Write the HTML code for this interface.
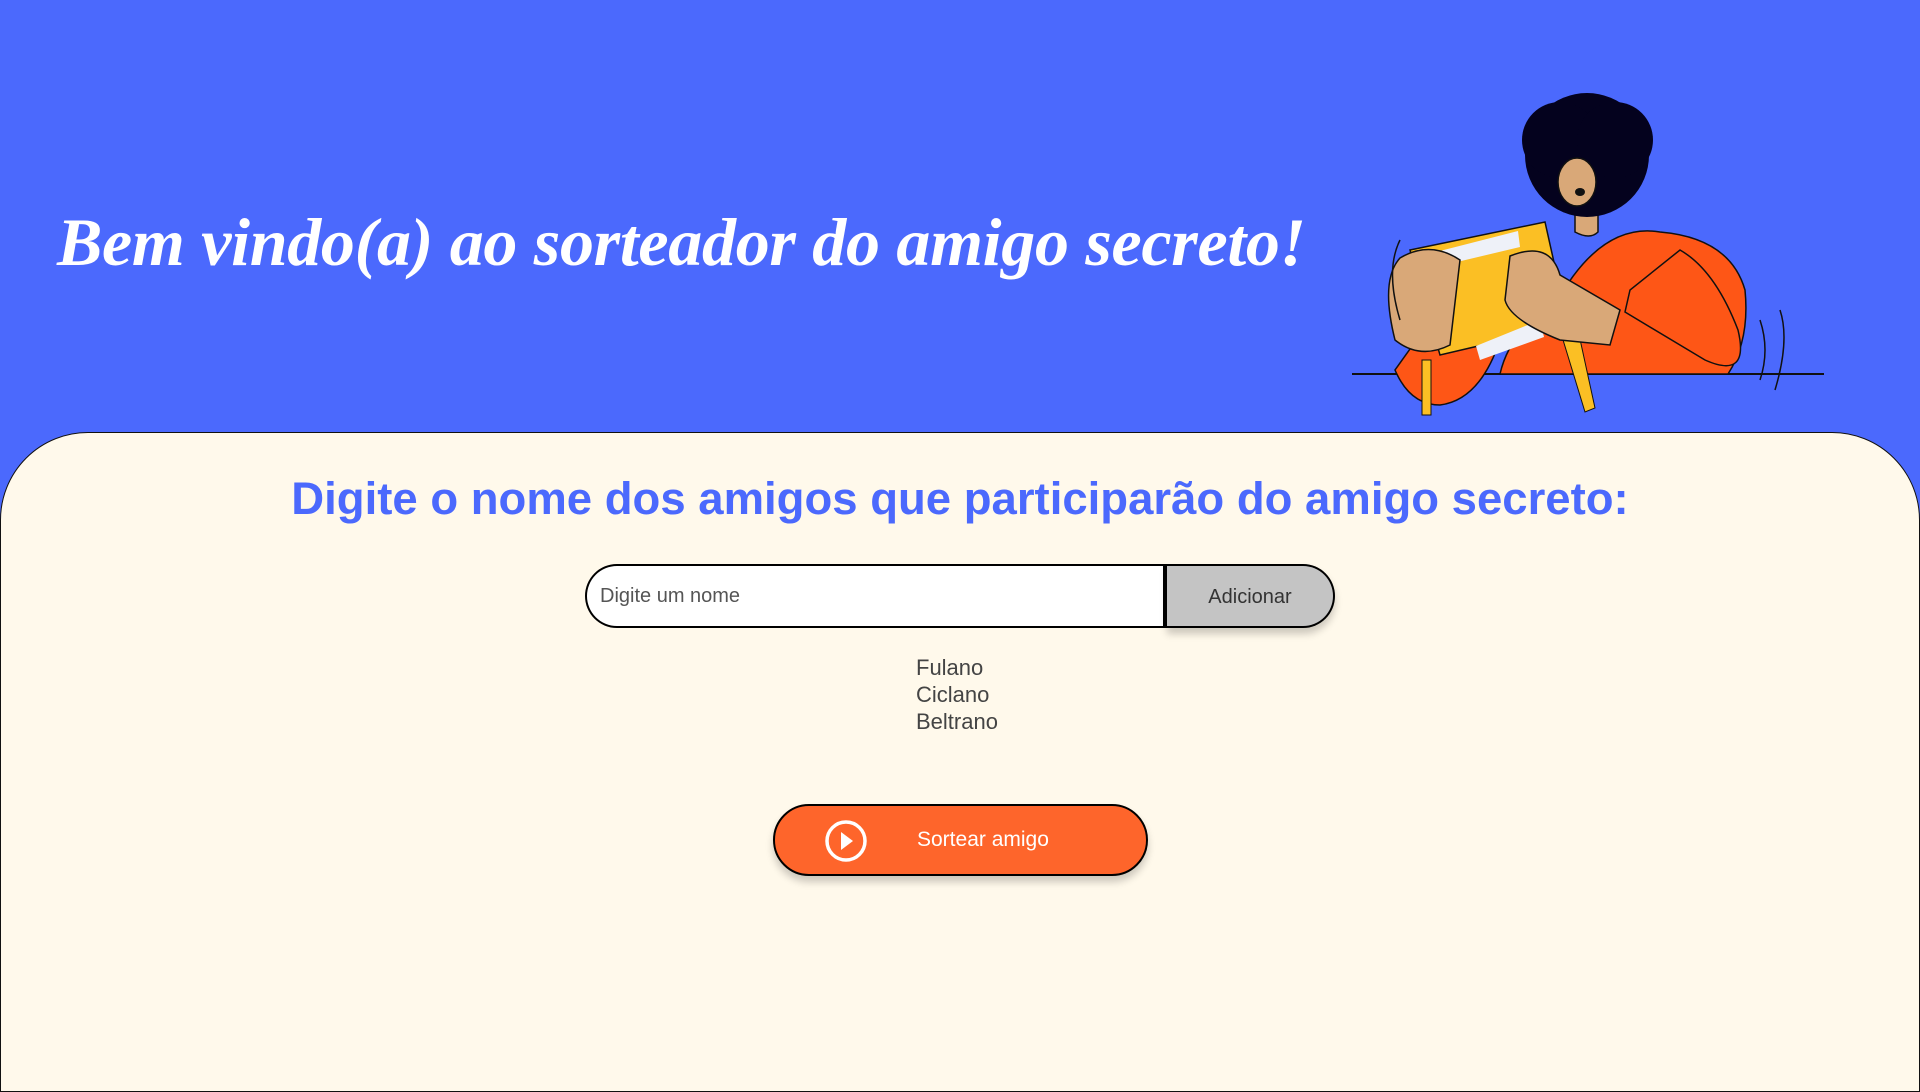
<!DOCTYPE html>
<html><head><meta charset="utf-8"><style>
*{margin:0;padding:0;box-sizing:border-box}
body{width:1920px;height:1080px;background:#4B69FD;position:relative;overflow:hidden;font-family:"Liberation Sans",sans-serif}
h1{position:absolute;left:57px;top:203px;font-family:"Liberation Serif",serif;font-style:italic;font-weight:bold;font-size:68px;color:#fff;white-space:nowrap;letter-spacing:-0.3px}
.panel{position:absolute;left:0;top:432px;width:1920px;height:660px;background:#FFF9EB;border:1.5px solid #111;border-radius:88px 88px 0 0}
h2{position:absolute;left:0;width:1920px;top:473px;text-align:center;color:#4B69FD;font-size:45.5px;font-weight:bold}
.inp{position:absolute;left:585px;top:564px;width:582px;height:64px;background:#fff;border:2.5px solid #000;border-right:4px solid #000;border-radius:32px 0 0 32px;font-size:20px;color:#555;padding:19px 0 0 13px}
.add{position:absolute;left:1167px;top:564px;width:168px;height:64px;background:#C4C4C4;border:2.5px solid #000;border-left:none;border-radius:0 32px 32px 0;font-size:20px;color:#333;text-align:center;line-height:62px;box-shadow:0 6px 8px rgba(0,0,0,.2)}
.list{position:absolute;left:916px;top:654px;font-size:22px;color:#444;line-height:27px}
.btn{position:absolute;left:773px;top:804px;width:375px;height:72px;background:#FE652B;border:2.5px solid #000;border-radius:36px;box-shadow:0 6px 8px rgba(0,0,0,.2);color:#fff;font-size:21px}
.btn span{position:absolute;left:142px;top:22px}
</style></head><body>
<h1>Bem vindo(a) ao sorteador do amigo secreto!</h1>
<svg style="position:absolute;left:1340px;top:90px" width="500" height="330" viewBox="1340 90 500 330">
<line x1="1352" y1="374" x2="1824" y2="374" stroke="#111" stroke-width="2"/>
<path d="M1555 305 Q1600 222 1660 232 Q1730 238 1745 290 Q1750 340 1728 374 L1500 374 Q1510 330 1555 305Z" fill="#FE5616" stroke="#111" stroke-width="1.5"/>
<path d="M1625 312 L1705 360 Q1750 380 1738 330 Q1715 270 1680 250 L1630 290Z" fill="#FE5616" stroke="#111" stroke-width="1.5"/>
<path d="M1395 370 Q1410 405 1440 405 Q1480 400 1500 340 L1420 335Z" fill="#FE5616" stroke="#111" stroke-width="1.5"/>
<path d="M1575 195 L1575 232 Q1590 240 1598 232 L1598 195Z" fill="#D9A878" stroke="#111" stroke-width="1.5"/>
<circle cx="1587" cy="155" r="62" fill="#04021E"/>
<circle cx="1560" cy="140" r="38" fill="#04021E"/><circle cx="1615" cy="140" r="38" fill="#04021E"/>
<ellipse cx="1577" cy="182" rx="19" ry="24" fill="#D9A878" stroke="#111" stroke-width="1.5"/>
<ellipse cx="1580" cy="192" rx="5" ry="4" fill="#111"/>
<path d="M1410 250 L1545 222 L1568 325 L1440 355Z" fill="#FBBF24" stroke="#111" stroke-width="1.5"/>
<path d="M1432 253 L1518 231 L1520 247 L1436 267Z" fill="#EEF1F8"/>
<path d="M1476 346 L1540 320 L1544 337 L1480 360Z" fill="#EEF1F8"/>
<rect x="1422" y="360" width="9" height="55" fill="#FBBF24" stroke="#111"/>
<path d="M1560 330 L1578 330 L1595 408 L1585 412Z" fill="#FBBF24" stroke="#111"/>
<path d="M1400 258 Q1380 280 1395 340 Q1420 360 1450 345 L1460 260 Q1430 240 1400 258Z" fill="#D9A878" stroke="#111" stroke-width="1.5"/>
<path d="M1510 256 Q1550 240 1560 275 L1620 310 L1610 345 L1560 340 Q1510 320 1505 300Z" fill="#D9A878" stroke="#111" stroke-width="1.5"/>
<path d="M1400 240 Q1385 270 1400 320 M1780 310 Q1790 340 1775 390 M1760 320 Q1770 350 1760 380" stroke="#111" fill="none" stroke-width="1.5"/>
</svg>
<div class="panel"></div>
<h2>Digite o nome dos amigos que participarão do amigo secreto:</h2>
<div class="inp">Digite um nome</div>
<div class="add">Adicionar</div>
<div class="list">Fulano<br>Ciclano<br>Beltrano</div>
<div class="btn"><svg style="position:absolute;left:49px;top:13px" width="44" height="44" viewBox="0 0 44 44"><circle cx="22" cy="22" r="19" fill="none" stroke="#fff" stroke-width="3.5"/><path d="M17 13 L29 22 L17 31Z" fill="#fff"/></svg><span>Sortear amigo</span></div>
</body></html>
